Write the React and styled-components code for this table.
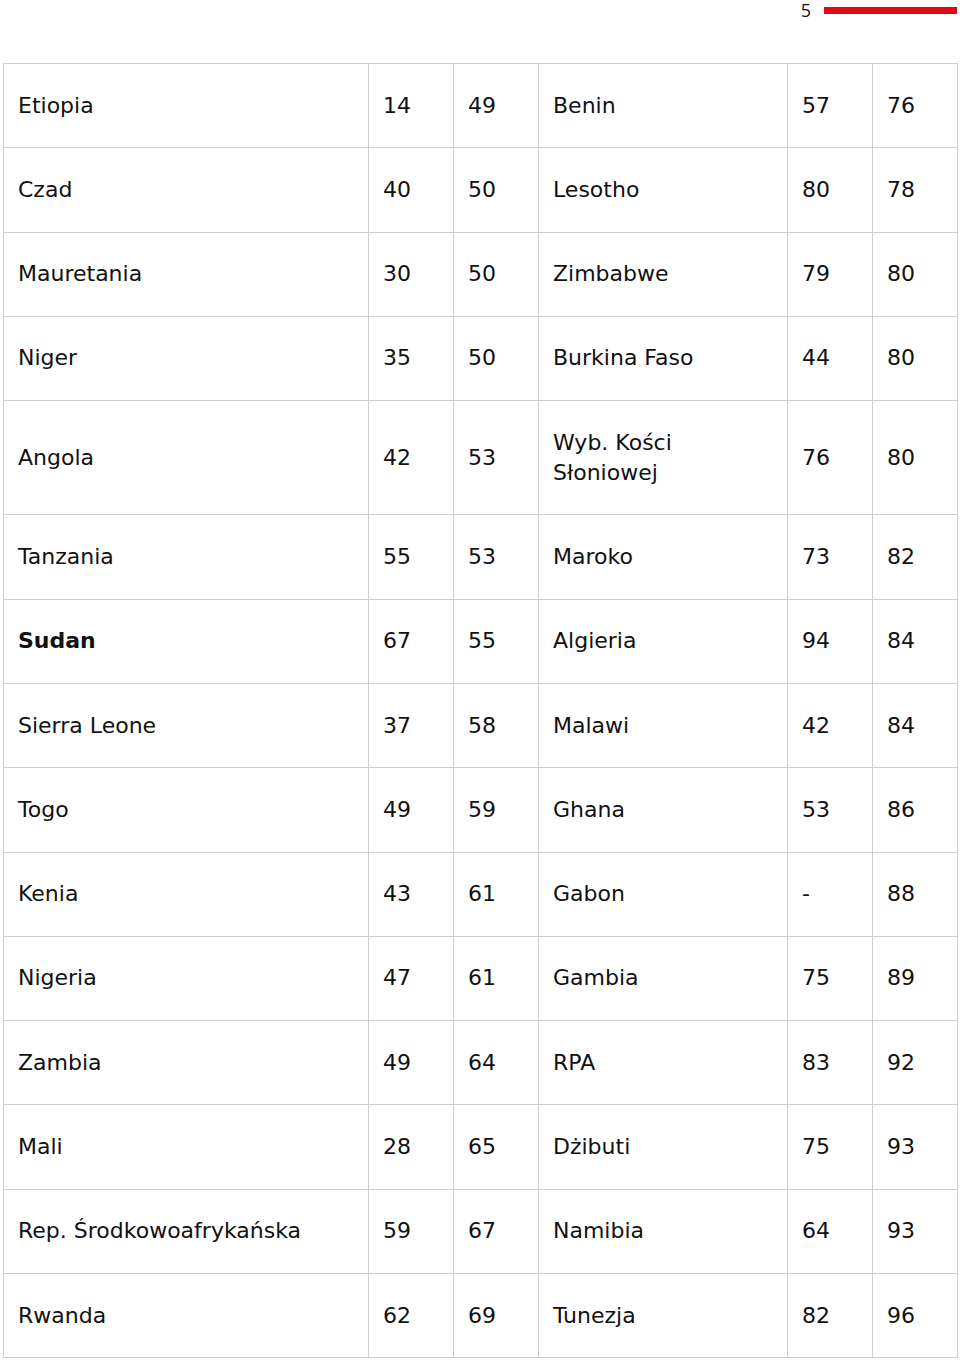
import React from 'react';
import styled, { createGlobalStyle } from 'styled-components';

const GlobalStyle = createGlobalStyle`
    body {
        margin: 0;
        background: #fff;
        font-family: "DejaVu Sans", sans-serif;
        color: #111;
    }
`;

const Page = styled.div`
    width: 960px;
    padding: 0 3px;
    box-sizing: border-box;
`;

const Header = styled.div`
    height: 63px;
    display: flex;
    align-items: flex-start;
    justify-content: flex-end;
`;

const PageNumber = styled.span`
    font-family: "Open Sans", sans-serif;
    font-size: 18px;
    line-height: 20px;
    margin-right: 13px;
    color: #111;
`;

const RedBar = styled.div`
    width: 133px;
    height: 7px;
    margin-top: 7px;
    background: #e30613;
`;

const Table = styled.table`
    width: 954px;
    border-collapse: collapse;
    table-layout: fixed;
`;

const Cell = styled.td`
    border: 1px solid #cfcfcf;
    padding: 26.65px 14px 26.65px 14px;
    font-size: 22px;
    line-height: 30px;
    font-weight: ${props => (props.$bold ? 700 : 400)};
    vertical-align: middle;
    white-space: nowrap;
`;

const rows = [
    ['Etiopia', '14', '49', 'Benin', '57', '76'],
    ['Czad', '40', '50', 'Lesotho', '80', '78'],
    ['Mauretania', '30', '50', 'Zimbabwe', '79', '80'],
    ['Niger', '35', '50', 'Burkina Faso', '44', '80'],
    ['Angola', '42', '53', ['Wyb. Kości', 'Słoniowej'], '76', '80'],
    ['Tanzania', '55', '53', 'Maroko', '73', '82'],
    ['Sudan', '67', '55', 'Algieria', '94', '84', true],
    ['Sierra Leone', '37', '58', 'Malawi', '42', '84'],
    ['Togo', '49', '59', 'Ghana', '53', '86'],
    ['Kenia', '43', '61', 'Gabon', '-', '88'],
    ['Nigeria', '47', '61', 'Gambia', '75', '89'],
    ['Zambia', '49', '64', 'RPA', '83', '92'],
    ['Mali', '28', '65', 'Dżibuti', '75', '93'],
    ['Rep. Środkowoafrykańska', '59', '67', 'Namibia', '64', '93'],
    ['Rwanda', '62', '69', 'Tunezja', '82', '96'],
];

const widths = [365, 85, 85, 249, 85, 85];

const renderText = text =>
    Array.isArray(text)
        ? text.map((line, i) => (
            <React.Fragment key={i}>
                {i > 0 && <br />}
                {line}
            </React.Fragment>
        ))
        : text;

export default function App() {
    return (
        <Page>
            <GlobalStyle />
            <Header>
                <PageNumber>5</PageNumber>
                <RedBar />
            </Header>
            <Table>
                <colgroup>
                    {widths.map((w, i) => (
                        <col key={i} style={{ width: w }} />
                    ))}
                </colgroup>
                <tbody>
                    {rows.map((row, r) => (
                        <tr key={r}>
                            {row.slice(0, 6).map((cell, c) => (
                                <Cell key={c} $bold={c === 0 && row[6]}>
                                    {renderText(cell)}
                                </Cell>
                            ))}
                        </tr>
                    ))}
                </tbody>
            </Table>
        </Page>
    );
}
